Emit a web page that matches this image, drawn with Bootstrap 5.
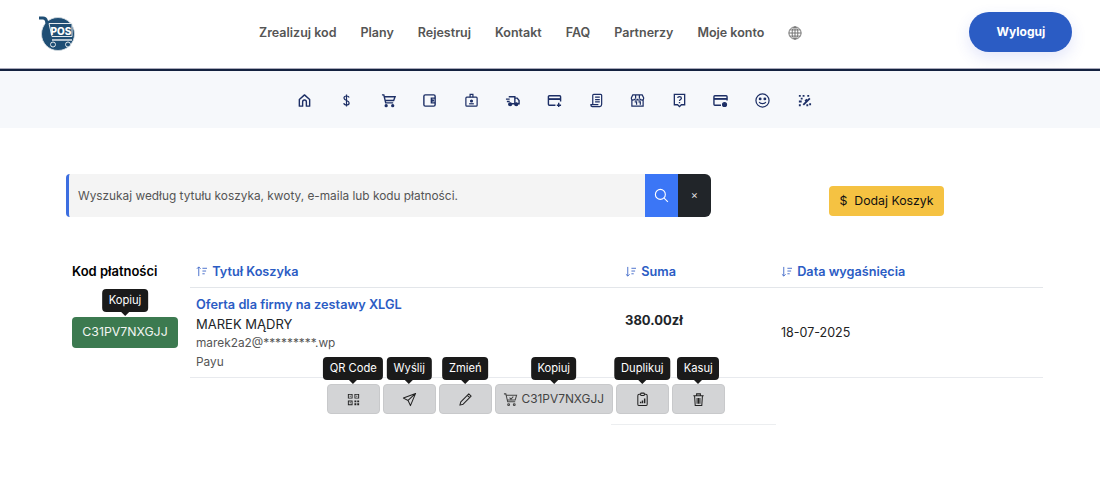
<!DOCTYPE html>
<html lang="pl"><head><meta charset="utf-8"><title>POS</title>
<link href="https://cdn.jsdelivr.net/npm/bootstrap@5.3.0/dist/css/bootstrap.min.css" rel="stylesheet">
<style>
body{font-family:Inter,"Liberation Sans",sans-serif;font-size:13px;color:#000;background:#fff;overflow:hidden}
.topbar{height:69px;padding:0 28px 0 38px}
.brand-logo{width:37px;height:36px;display:block;margin-top:-3px;flex:none}
.top-links{gap:24px;margin-left:184px;margin-right:167px;margin-top:-4px;flex:none}
.top-links a{color:#555;font-weight:600;font-size:12.5px;text-decoration:none;line-height:16px;white-space:nowrap}
.top-links svg{display:block;width:14px;height:14px;color:#666}
.logout{width:103px;height:40px;flex:none;border-radius:20px;background:#2b5cc4;color:#fff;font-weight:700;font-size:12px;border:0;box-shadow:0 6px 16px rgba(60,80,220,.14);margin-top:-6px}
.rule-line{height:2px;background:#13213f;box-shadow:0 -1px 0 #aab}
.icon-band{height:57px;background:#f6f8fb;gap:26.6px;color:#1d2f66;padding:2px 0 0 9px}
.icon-band svg{width:15px;height:15px;display:block}
.search-row{padding:46px 0 0 66px;height:116px}
.search-box{width:645px;height:43px;border-left:3px solid #3c6ee0;border-radius:4px 6px 6px 4px;background:#f4f4f4;overflow:hidden}
.search-text{flex:1;padding-left:9px;color:#555;font-size:11.85px;line-height:44px}
.search-go{width:33px;background:#3b76f6;color:#fff}
.search-x{width:33px;background:#212529;color:#ddd;font-size:11px}
.add-cart{width:115px;height:30px;margin:12px 0 0 118px;background:#f5c242;border:0;border-radius:4px;font-size:12.3px;color:#111;padding:0}
.data-area{padding-left:72px}
.code-col{width:106px;margin-right:12px}
.code-head{font-weight:600;font-size:13px;line-height:16px;padding-top:19px;white-space:nowrap}
.code-btn{display:block;width:106px;height:31px;margin-top:38px;background:#3c7a50;color:#f2f5f2;border:0;border-radius:4px;font-size:12.3px;padding:0;position:relative}
.grid-wrap{width:853px;position:relative}
.cart-table{table-layout:fixed;width:853px;margin:0;border-collapse:collapse}
.cart-table th,.cart-table td{padding:0;border:0;background:transparent}
.cart-table th{height:43px;vertical-align:bottom;padding-bottom:7px;color:#2b5cc4;font-weight:600;font-size:12.7px;line-height:16px;border-bottom:1px solid #e3e6ea}
.cart-table th svg{width:11px;height:11px;margin-right:2px;vertical-align:-1px;color:#3f68c8}
.col-a{padding-left:6px!important;width:421px}
.col-b{padding-left:14px!important;width:165px}
.col-c{padding-left:5px!important}
.main-row td{height:90px;border-bottom:1px solid #e8eaee;vertical-align:top}
.main-row td.col-a{padding-top:7px}
.main-row td.col-b{padding-top:23px}
.main-row td.col-c{vertical-align:middle;padding-top:3px}
.cart-title{color:#2b5cc4;font-weight:600;font-size:12.75px;line-height:19px}
.cart-buyer{line-height:20px}
.cart-meta{color:#555;font-size:11.85px;line-height:19.5px}
.cart-sum{font-weight:700;display:block;line-height:19px}
.cart-date{font-size:12.5px;color:#222;display:block}
.gap-row td{height:47px}
.gap-row .col-b{border-bottom:1px solid #eceef0}
.action-row{position:absolute;left:137px;top:140px;gap:3.5px}
.act{height:30px;width:52.5px;background:#d3d4d6;border:1px solid #c8c9cb;border-radius:4px;color:#222;position:relative;padding:0;font-size:11.9px;display:flex;align-items:center;justify-content:center;gap:3px}
.act svg{width:15px;height:15px;display:block}
.act-wide{width:117.5px;color:#444}
.hint{position:absolute;left:50%;transform:translateX(-50%);bottom:calc(100% + 5px);height:23px;line-height:23px;padding:0 6.500px;background:#1a1a1a;color:#fff;font-size:11.2px;border-radius:4px;white-space:nowrap;font-weight:400}
.hint::after{content:"";position:absolute;left:50%;bottom:-4px;margin-left:-5px;border:5px solid transparent;border-bottom:0;border-top-color:#1a1a1a}
</style></head>
<body>
<nav class="topbar d-flex align-items-center bg-white">
<svg class="brand-logo" viewBox="0 0 37 36"><circle cx="20" cy="19" r="16.500" fill="#1f4e74" stroke="#d9e0e3" stroke-width=".8"/><path d="M1 3h4c2 0 3 1 3.500 3l4 21" fill="none" stroke="#1f4e74" stroke-width="3"/><path d="M11 8.500h23v13H14z" fill="#1f4e74" stroke="#e4e9ec" stroke-width="1"/><text x="23" y="19.500" font-size="10" font-weight="800" fill="#fff" text-anchor="middle" font-family="Inter">POS</text><path d="M14 25h20" stroke="#e4e9ec" stroke-width="1.500"/><circle cx="15" cy="29.500" r="2.500" fill="#1f4e74" stroke="#e4e9ec"/><circle cx="30" cy="29.500" r="2.500" fill="#1f4e74" stroke="#e4e9ec"/></svg>
<div class="top-links d-flex align-items-center">
<a href="#">Zrealizuj kod</a><a href="#">Plany</a><a href="#">Rejestruj</a><a href="#">Kontakt</a><a href="#">FAQ</a><a href="#">Partnerzy</a><a href="#">Moje konto</a>
<svg viewBox="0 0 16 16" fill="none" stroke="currentColor" stroke-width="1"><circle cx="8" cy="8" r="7"/><ellipse cx="8" cy="8" rx="3.300" ry="7"/><path d="M8 1v14M1 8h14M2 4.500h12M2 11.500h12"/></svg>
</div>
<button class="logout">Wyloguj</button>
</nav>
<div class="rule-line"></div>
<div class="icon-band d-flex justify-content-center align-items-center">
<svg viewBox="0 0 16 16" fill="none" stroke="currentColor" stroke-width="1.500" stroke-linejoin="round"><path d="M2.500 14V7L8 2l5.500 5v7h-3.500v-4.500a2 2 0 0 0-4 0V14z"/></svg>
<svg viewBox="0 0 16 16" fill="none" stroke="currentColor" stroke-width="1.300"><path d="M10.800 4.800C10.500 3.700 9.500 3.200 8 3.200 6.500 3.200 5.300 3.900 5.300 5.400 5.300 8.600 10.800 7.300 10.800 10.600 10.800 12.100 9.600 12.800 8 12.800c-1.600 0-2.700-.7-2.900-2M8 1.500v13"/></svg>
<svg viewBox="0 0 16 16" fill="none" stroke="currentColor" stroke-width="1.500"><path d="M1 2h2l2 8.500h8M3.500 4H15l-1.500 4H5"/><circle cx="5.500" cy="13.500" r="1" fill="currentColor"/><circle cx="12.500" cy="13.500" r="1" fill="currentColor"/></svg>
<svg viewBox="0 0 16 16" fill="none" stroke="currentColor" stroke-width="1.500"><rect x="2" y="2" width="12" height="12" rx="1.500"/><path d="M14 5.500h-4v5h4"/><circle cx="11.500" cy="8" r=".6" fill="currentColor"/></svg>
<svg viewBox="0 0 16 16" fill="none" stroke="currentColor" stroke-width="1.300"><rect x="2" y="4.500" width="12" height="9.500" rx="1"/><path d="M6.500 4.500V1.500h3v3"/><circle cx="8" cy="8.500" r="1" fill="currentColor"/><path d="M5.500 11.500h5"/></svg>
<svg viewBox="0 0 16 16" fill="none" stroke="currentColor" stroke-width="1.500"><path d="M4 4h6.500v7.500H7M10.500 5.500H13l2 2.500v3.500h-1.500M1 6.500h4M2 9h3"/><circle cx="5.500" cy="12" r="1.500" fill="currentColor"/><circle cx="12" cy="12" r="1.500" fill="currentColor"/></svg>
<svg viewBox="0 0 16 16" fill="none" stroke="currentColor" stroke-width="1.500"><path d="M9 13H2.500a1 1 0 0 1-1-1V4a1 1 0 0 1 1-1h11a1 1 0 0 1 1 1v5"/><path d="M1.500 6.500h13" stroke-width="2"/><path d="M12.500 10.500v4.500M10.500 13h4.500"/></svg>
<svg viewBox="0 0 16 16" fill="none" stroke="currentColor" stroke-width="1.300"><path d="M4 12V2.500a1 1 0 0 1 1-1h7.500a1 1 0 0 1 1 1V12a2.500 2.500 0 0 1-2 2.500H3.500A1.800 1.800 0 0 1 2 12.500h8M6.500 4.500h5M6.500 7h5M6.500 9.500h5"/></svg>
<svg viewBox="0 0 16 16" fill="none" stroke="currentColor" stroke-width="1.300"><path d="M2 6.500V14h12V6.500M3 2h10l1.500 3v1a1.600 1.600 0 0 1-3.200 0 1.600 1.600 0 0 1-3.300 0 1.600 1.600 0 0 1-3.300 0 1.600 1.600 0 0 1-3.200 0V5zM6 2v4M10 2v4M5 9.500h2v3M9 9.500h2v3"/></svg>
<svg viewBox="0 0 16 16" fill="none" stroke="currentColor" stroke-width="1.400"><path d="M2.500 1.500h11v11H10l-2 2-2-2H2.500zM6 5.300C6.200 4.300 7 3.800 8 3.800c1.200 0 2 .7 2 1.700 0 1.500-2 1.500-2 3M8 9.700v1.200"/></svg>
<svg viewBox="0 0 16 16" fill="none" stroke="currentColor" stroke-width="1.500"><path d="M8.500 13H2a1 1 0 0 1-1-1V4a1 1 0 0 1 1-1h12a1 1 0 0 1 1 1v4"/><path d="M1 6.300h14" stroke-width="2"/><circle cx="12.300" cy="12.300" r="2" fill="currentColor"/></svg>
<svg viewBox="0 0 16 16" fill="none" stroke="currentColor" stroke-width="1.300"><circle cx="8" cy="8" r="7"/><circle cx="5.500" cy="6.300" r=".9" fill="currentColor"/><circle cx="10.500" cy="6.300" r=".9" fill="currentColor"/><path d="M4.500 9.500c1 2.400 6 2.400 7 0"/></svg>
<svg viewBox="0 0 16 16" fill="currentColor"><path d="M2 2h2v2H2zM6 2h2v2H6zM11 2h2v2h-2zM4 5h2v2H4zM2 8h3v2H2zM13 5l1.400 1.400-7 7L6 12zM8 8l2-2 1 1-2 2zM2 12h2v2H2zM10 12h2v2h-2zM13 11h2v2h-2z"/></svg>
</div>
<div class="search-row d-flex">
<div class="search-box d-flex"><div class="search-text">Wyszukaj według tytułu koszyka, kwoty, e-maila lub kodu płatności.</div>
<div class="search-go d-flex align-items-center justify-content-center"><svg width="15" height="15" viewBox="0 0 16 16" fill="none" stroke="currentColor" stroke-width="1.200"><circle cx="6.800" cy="6.800" r="5.300"/><path d="M10.800 10.800l4 4"/></svg></div>
<div class="search-x d-flex align-items-center justify-content-center">×</div></div>
<button class="add-cart">$&nbsp;&nbsp;Dodaj Koszyk</button>
</div>
<div class="data-area d-flex">
<div class="code-col"><div class="code-head">Kod płatności</div>
<button class="code-btn">C31PV7NXGJJ<span class="hint">Kopiuj</span></button></div>
<div class="grid-wrap">
<table class="table cart-table"><thead><tr>
<th class="col-a"><svg viewBox="0 0 12 12" fill="none" stroke="currentColor"><path d="M3 11V1M1 3l2-2 2 2M7 2.500h5M7 5.500h4M7 8.500h2.500"/></svg> Tytuł Koszyka</th>
<th class="col-b"><svg viewBox="0 0 12 12" fill="none" stroke="currentColor"><path d="M3 1v10M1 9l2 2 2-2M7 2.500h5M7 5.500h4M7 8.500h2.500"/></svg> Suma</th>
<th class="col-c"><svg viewBox="0 0 12 12" fill="none" stroke="currentColor"><path d="M3 1v10M1 9l2 2 2-2M7 2.500h5M7 5.500h4M7 8.500h2.500"/></svg> Data wygaśnięcia</th></tr></thead>
<tbody><tr class="main-row"><td class="col-a"><div class="cart-title">Oferta dla firmy na zestawy XLGL</div><div class="cart-buyer">MAREK MĄDRY</div><div class="cart-meta">marek2a2@*********.wp</div><div class="cart-meta">Payu</div></td>
<td class="col-b"><span class="cart-sum">380.00zł</span></td><td class="col-c"><span class="cart-date">18-07-2025</span></td></tr>
<tr class="gap-row"><td class="col-a"></td><td class="col-b"></td><td class="col-c"></td></tr></tbody></table>
<div class="action-row d-flex">
<button class="act"><span class="hint">QR Code</span><svg viewBox="0 0 16 16" fill="currentColor"><path d="M2 2h5v5H2zm1 1v3h3V3zM9 2h5v5H9zm1 1v3h3V3zM2 9h5v5H2zm1 1v3h3v-3zM9 9h2v2H9zM12 9h2v2h-2zM9 12h2v2H9zM12 12h2v2h-2zM4 4h1v1H4zM11 4h1v1h-1zM4 11h1v1H4z" fill-rule="evenodd"/></svg></button>
<button class="act"><span class="hint">Wyślij</span><svg viewBox="0 0 16 16" fill="none" stroke="currentColor" stroke-width="1.100" stroke-linejoin="round"><path d="M14.500 1.500L1.500 6.500l5 2.500 2.500 5.500zM14.500 1.500L6.500 9"/></svg></button>
<button class="act"><span class="hint">Zmień</span><svg viewBox="0 0 16 16" fill="none" stroke="currentColor" stroke-width="1.100" stroke-linejoin="round"><path d="M11.500 2l2.500 2.500L5.500 13l-3.500 1 1-3.500zM10 3.500L12.500 6"/></svg></button>
<button class="act act-wide"><span class="hint">Kopiuj</span><svg viewBox="0 0 16 16" fill="none" stroke="currentColor" stroke-width="1.100"><path d="M1 2h2l2 8.500h8M3.500 3.500h11l-1.500 5H5M7 6l1.500 1.500L11 5"/><circle cx="6" cy="13.500" r="1"/><circle cx="12" cy="13.500" r="1"/></svg>C31PV7NXGJJ</button>
<button class="act"><span class="hint">Duplikuj</span><svg viewBox="0 0 16 16" fill="none" stroke="currentColor" stroke-width="1.100"><rect x="3" y="2.500" width="10" height="12" rx="1.500"/><rect x="6" y="1.200" width="4" height="2.500" rx=".8" fill="#d3d4d6"/><path d="M6 12v-1.500M8 12V9M10.300 12V7" stroke-width="1.500"/></svg></button>
<button class="act"><span class="hint">Kasuj</span><svg viewBox="0 0 16 16" fill="none" stroke="currentColor" stroke-width="1.100"><path d="M2.500 4h11M6 4V2h4v2M3.800 4l.7 10.500h7L12.200 4M6.500 6.500v6M8 6.500v6M9.500 6.500v6"/></svg></button>
</div>
</div>
</div>
<script src="https://cdn.jsdelivr.net/npm/bootstrap@5.3.0/dist/js/bootstrap.bundle.min.js"></script>
</body></html>
